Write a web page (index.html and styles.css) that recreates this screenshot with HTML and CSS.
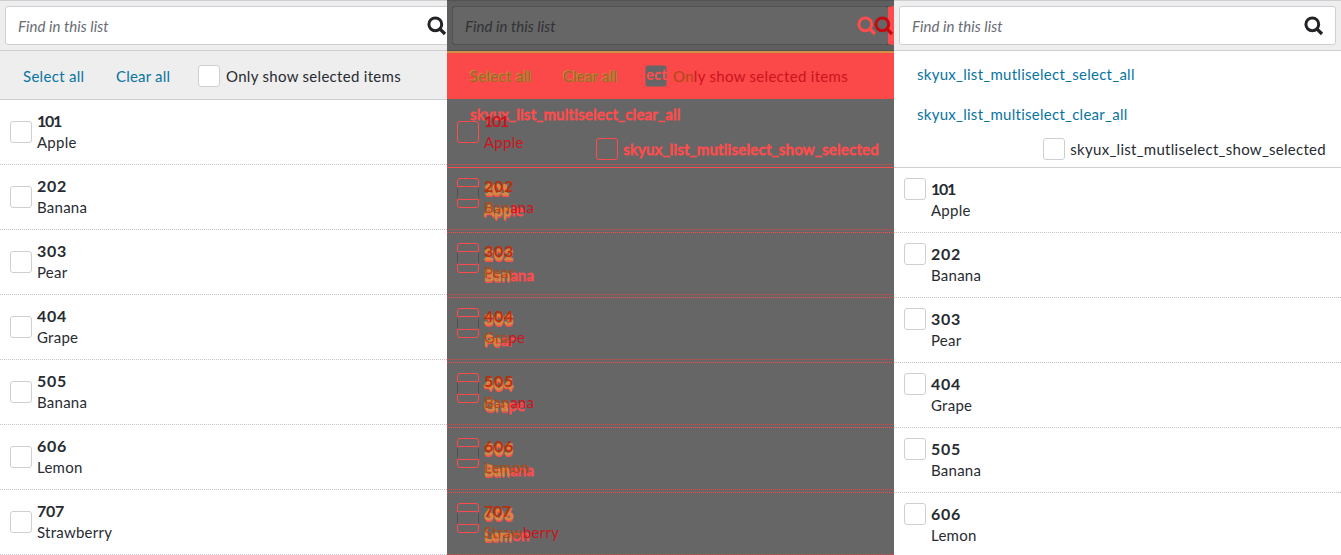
FILE: index.html
```html
<!DOCTYPE html>
<html lang="en">
<head>
<meta charset="utf-8">
<title>List multiselect comparison</title>
<link rel="stylesheet" href="styles.css">
</head>
<body>
<svg class="defs" aria-hidden="true"><symbol id="search" viewBox="0 0 20 20"><circle cx="8.3" cy="8.3" r="6.4" fill="none" stroke="currentColor" stroke-width="3"/><path d="M12.6 12.6L18 18" fill="none" stroke="currentColor" stroke-width="3.3"/></symbol></svg>
<main class="compare">
<section class="panel before">
  <div class="search"><div class="field"><span class="hint">Find in this list</span><svg class="icon"><use href="#search"/></svg></div></div>
  <div class="toolbar"><a class="select">Select all</a><a class="clear">Clear all</a><i class="box"></i><span class="only">Only show selected items</span></div>
  <div class="row"><i class="box"></i><div><b class="one">101</b><p>Apple</p></div></div>
  <div class="row"><i class="box"></i><div><b>202</b><p>Banana</p></div></div>
  <div class="row"><i class="box"></i><div><b>303</b><p>Pear</p></div></div>
  <div class="row"><i class="box"></i><div><b>404</b><p>Grape</p></div></div>
  <div class="row"><i class="box"></i><div><b>505</b><p>Banana</p></div></div>
  <div class="row"><i class="box"></i><div><b>606</b><p>Lemon</p></div></div>
  <div class="row"><i class="box"></i><div><b class="seven">707</b><p>Strawberry</p></div></div>
</section>
<section class="diff">
  <div class="panel layer after ghost-new">
    <div class="search"><div class="field"><span class="hint"></span><svg class="icon"><use href="#search"/></svg></div></div>
    <div class="toolbar"><a class="key1"></a><a class="key2">skyux_list_multiselect_clear_all</a><div class="show"><i class="box"></i><span class="key3">skyux_list_mutliselect_show_selected</span></div></div>
    <div class="row"><i class="box"></i><div><b class="one">101</b><p><em>App</em>le</p></div></div>
    <div class="row"><i class="box"></i><div><b>202</b><p><em>Ban</em>ana</p></div></div>
    <div class="row"><i class="box"></i><div><b>303</b><p><em>Pe</em>ar</p></div></div>
    <div class="row"><i class="box"></i><div><b>404</b><p><em>Gra</em>pe</p></div></div>
    <div class="row"><i class="box"></i><div><b>505</b><p><em>Ban</em>ana</p></div></div>
    <div class="row"><i class="box"></i><div><b>606</b><p><em>Lem</em>on</p></div></div>
  </div>
  <div class="panel layer before ghost-old">
    <div class="search"><div class="field"><span class="hint">Find in this list</span><svg class="icon"><use href="#search"/></svg></div></div>
    <div class="toolbar"><a class="select">Select all</a><a class="clear">Clear all</a><i class="box">ect</i><span class="only"><em>On</em>ly show selected items</span></div>
    <div class="row"><i class="box"></i><div><b class="one">101</b><p>Apple</p></div></div>
    <div class="row"><i class="box"></i><div><b>202</b><p><em>Ban</em>ana</p></div></div>
    <div class="row"><i class="box"></i><div><b>303</b><p><em>Pear</em></p></div></div>
    <div class="row"><i class="box"></i><div><b>404</b><p><em>Gra</em>pe</p></div></div>
    <div class="row"><i class="box"></i><div><b>505</b><p><em>Ban</em>ana</p></div></div>
    <div class="row"><i class="box"></i><div><b>606</b><p><em>Lemon</em></p></div></div>
    <div class="row"><i class="box"></i><div><b class="seven">707</b><p><em>Straw</em>berry</p></div></div>
  </div>
</section>
<section class="panel after">
  <div class="search"><div class="field"><span class="hint">Find in this list</span><svg class="icon"><use href="#search"/></svg></div></div>
  <div class="toolbar"><a class="key1">skyux_list_mutliselect_select_all</a><a class="key2">skyux_list_multiselect_clear_all</a><div class="show"><i class="box"></i><span class="key3">skyux_list_mutliselect_show_selected</span></div></div>
  <div class="row"><i class="box"></i><div><b class="one">101</b><p>Apple</p></div></div>
  <div class="row"><i class="box"></i><div><b>202</b><p>Banana</p></div></div>
  <div class="row"><i class="box"></i><div><b>303</b><p>Pear</p></div></div>
  <div class="row"><i class="box"></i><div><b>404</b><p>Grape</p></div></div>
  <div class="row"><i class="box"></i><div><b>505</b><p>Banana</p></div></div>
  <div class="row"><i class="box"></i><div><b>606</b><p>Lemon</p></div></div>
</section>
</main>
</body>
</html>
```
FILE: styles.css
```css
* { box-sizing: border-box; }
body { margin: 0; overflow: hidden; font: 15px/22px Lato, "Open Sans", sans-serif; color: #282b31; background: #fff; }
.defs { position: absolute; width: 0; height: 0; }
.compare { display: grid; grid-template-columns: repeat(3, 447px); height: 555px; overflow: hidden; }
.panel { width: 447px; height: 555px; overflow: hidden; background: #fff; }
p { margin: 0; letter-spacing: .25px; }
em { font-style: normal; }

/* Search bar */
.search { height: 51px; padding: 5px 5px 0; border-top: 1px solid #cdcfd2; border-bottom: 1px solid #cdcfd2; background: #eee; }
.field { display: flex; align-items: center; height: 39px; padding: 0 11px 0 12px; border: 1px solid #cdcfd2; border-radius: 3px; background: #fff; }
.hint { flex: 1; color: #686c73; font-style: italic; line-height: 20px; letter-spacing: .05px; }
.icon { flex: none; width: 20px; height: 20px; margin-top: 1px; color: #212327; }
.before .field { width: 460px; }
.before .icon { margin-right: 6px; }

/* Toolbar */
.toolbar a { color: #0974a1; }
.before .toolbar { display: flex; align-items: center; height: 49px; padding: 2px 0 0 23px; border-bottom: 1px solid #cdcfd2; background: #eee; }
.select { width: 93px; letter-spacing: .3px; }
.clear { width: 82px; letter-spacing: .2px; }
.only { margin-left: 6px; letter-spacing: .3px; white-space: nowrap; }
.after .toolbar { display: flex; flex-direction: column; height: 117px; padding: 12px 15px 0 23px; border-bottom: 1px solid #cdcfd2; }
.key1, .key2 { height: 40px; line-height: 22px; letter-spacing: .27px; }
.show { display: flex; justify-content: flex-end; align-items: center; margin-top: -5px; }
.key3 { margin-left: 5px; line-height: 20px; letter-spacing: .28px; }
.box { flex: none; width: 22px; height: 22px; border: 1px solid #cdcfd2; border-radius: 3px; background: #fff; }

/* List rows */
.row { display: flex; gap: 5px; height: 65px; padding: 10px; border-bottom: 1px dotted #c2c4c7; }
.before .row .box { margin-top: 11px; }
.row b { display: block; height: 21px; font-size: 16px; letter-spacing: .7px; }
.row .one { letter-spacing: -1.3px; }
.row .seven { letter-spacing: -.3px; }

/* Difference overlay */
.diff { position: relative; height: 555px; overflow: hidden; background: #666; }
.layer { position: absolute; inset: 0; background: transparent; }
.layer .search { background: #5f5f5f; border-color: #525252; }
.layer .field { background: #666; border-color: #525252; }
.layer .box { background: transparent; border-color: #ff4b4b; }
.ghost-new, .ghost-new a.key2 { color: #ff4c4c; -webkit-text-stroke: .8px #ff4c4c; }
.ghost-new .toolbar { border-bottom: 1px solid #ff4b4b; }
.ghost-new .row b, .ghost-new em { color: #db8542; -webkit-text-stroke: 1px #db8542; text-shadow: 0 2px #ff4c4c; }
.ghost-new .row { border-color: #ff4b4b; }
.ghost-new .icon { color: #ff4c4c; stroke-width: 1px; }
.ghost-old { color: #c9151c; }
.ghost-old .search { background: transparent; }
.ghost-old .field { width: 442px; padding-right: 0; border-right: 6px solid #ff4b4b; border-radius: 3px 0 0 3px; background: transparent; }
.ghost-old .hint { color: #303235; }
.ghost-old .icon { position: relative; left: 6px; margin: 1px 0 0; color: #c30a10; }
.ghost-old .toolbar { padding-top: 0; border-top: 2px solid #d09045; border-bottom-color: #666; background: #fb4848; }
.ghost-old .toolbar a { color: #a16124; text-shadow: -1px -1px #cb8440, 1px 0 #cb8440; }
.ghost-old .toolbar .box { background: #666; border-color: #aa5959; color: #ff4c4c; font-weight: bold; font-style: normal; line-height: 17px; }
.ghost-old em { color: #b14a14; }
.ghost-old .row { border-color: #e04444; }
.ghost-old .row + .row b { color: #b8300d; }
.ghost-old .row + .row .box { position: relative; }
.ghost-old .row + .row .box::before { content: ""; position: absolute; top: 0; left: -1px; right: -1px; height: 12px; border: solid #525252; border-width: 0 1px; }
```
